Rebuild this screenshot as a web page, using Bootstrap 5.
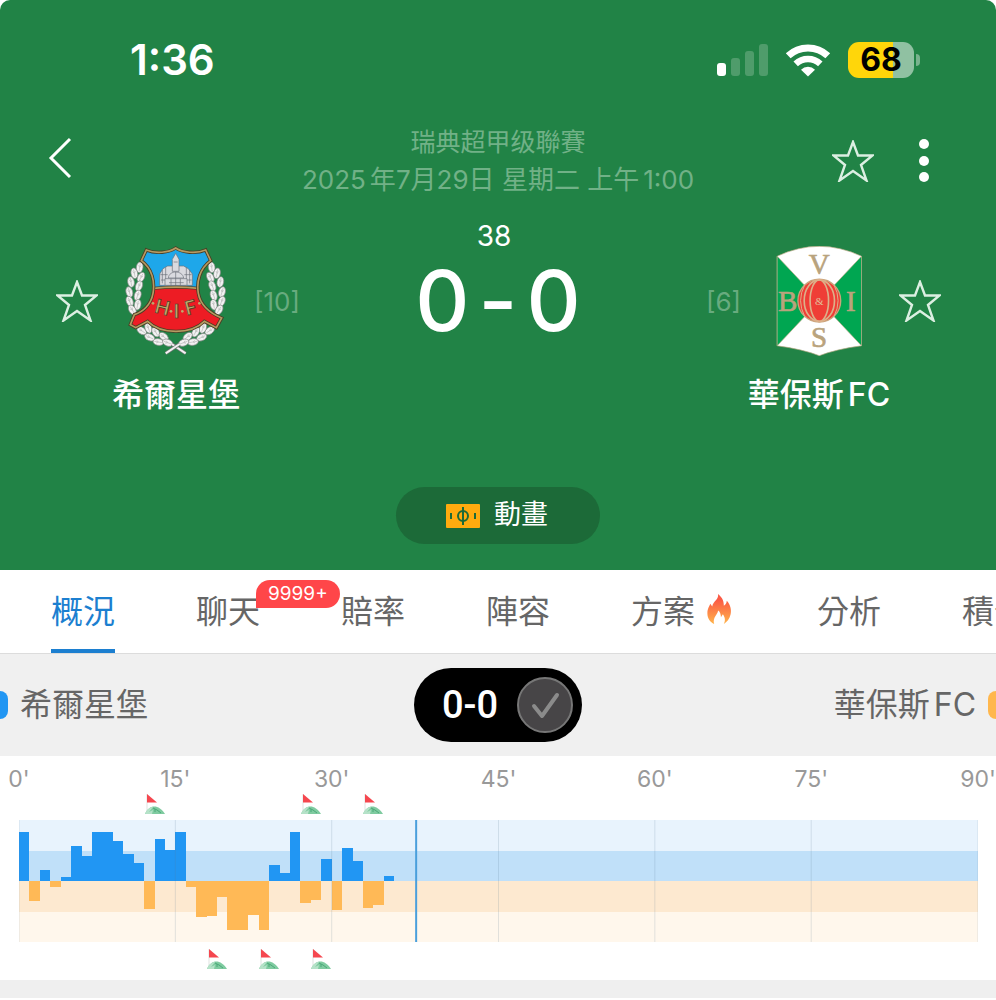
<!DOCTYPE html>
<html lang="zh-Hant">
<head>
<meta charset="utf-8">
<meta name="viewport" content="width=device-width, initial-scale=1">
<title>希爾星堡 0-0 華保斯FC</title>
<link rel="stylesheet" href="https://cdn.jsdelivr.net/npm/bootstrap@5.3.0/dist/css/bootstrap.min.css">
<style>
  body { font-family: Inter, "Noto Sans CJK TC", sans-serif; background: #fff; overflow-x: hidden; }
  button { font-family: inherit; }
  svg { display: block; flex: none; }

  .match-head { background: #218346; border-radius: 10px 10px 0 0; padding: 36px 0 26px; }
  .status-bar { height: 48px; padding: 0 76px 0 130px; }
  .clock { font-size: 42px; line-height: 48px; font-weight: 600; }
  .battery { width: 66px; height: 36px; border-radius: 11px; font-size: 32px; line-height: 36px; font-weight: 700; color: #000;
    background: linear-gradient(90deg, #ffd60a 68%, #90c1a2 68%); }
  .battery-cap { width: 4px; height: 12px; border-radius: 0 6px 6px 0; background: #79b38e; margin-left: 2px; }

  .top-nav { margin-top: 40px; padding: 0 48px; }
  .side { flex: 1 1 0; }
  .icon-btn { background: none; border: 0; padding: 0; color: #fff; }
  .more-btn { padding: 0 18px 0 44px; }
  .league { font-size: 25px; line-height: 37px; color: #71b187; }
  .kickoff { font-size: 26px; line-height: 37px; color: #71b187; white-space: nowrap; }

  .team { margin-top: 48px; }
  .team-home { padding-left: 56px; }
  .team-away { padding-right: 55px; }
  .crest-line { height: 110px; }
  .team-body { width: 144px; margin: 0 6px; }
  .team-away .team-body { margin-right: 8px; }
  .team-name { font-size: 32px; line-height: 40px; margin-top: 19px; font-weight: 500; white-space: nowrap; }
  .rank { font-size: 26px; color: #68ab7f; }
  .minute { font-size: 28px; line-height: 36px; margin-top: 20px; }
  .score { font-weight: 500; font-size: 84px; line-height: 94px; gap: 9px; }
  .anim-btn { margin-top: 72px; height: 57px; padding: 0 52px 0 50px; border: 0; border-radius: 29px; background: #1c6a38; color: #fff; font-size: 27px; gap: 14px; }

  .tab-strip { gap: 81px; padding-left: 51px; border-bottom: 1px solid #dcdcdc; overflow: hidden; }
  .tab-link { font-size: 32px; line-height: 84px; height: 83px; color: #666; text-decoration: none; white-space: nowrap; flex: none; }
  .tab-link.active { color: #1c7fd0; box-shadow: inset 0 -4px #1c7fd0; }
  .flame { margin: 24px 4px 0 11px; }
  .chat-count { position: absolute; left: 60px; top: 10px; height: 28px; padding: 0 12px; border-radius: 14px 14px 14px 0; background: #ff4649; color: #fff; font-size: 19px; line-height: 28px; }

  .team-band { background: #f0f0f0; height: 102px; font-size: 32px; color: #666; }
  .swatch { width: 8px; height: 28px; }
  .swatch-home { background: #2196f3; border-radius: 0 8px 8px 0; margin-right: 12px; }
  .swatch-away { background: #ffb74d; border-radius: 8px 0 0 8px; margin-left: 12px; }
  .score-pill { width: 168px; height: 74px; border: 0; border-radius: 37px; background: #000; color: #fff; padding: 0 9px 0 28px; font-family: Roboto, sans-serif; font-weight: 500; font-size: 38px; }

  .momentum { padding: 8px 18px 11px 19px; }
  .minutes { display: grid; grid-template-columns: repeat(92, minmax(0, 1fr)); grid-auto-columns: 0; }
  .minutes > * { grid-row: 1; width: 0; display: flex; justify-content: center; white-space: nowrap; }
  .axis { height: 30px; line-height: 30px; font-size: 23px; color: #999; }
  .events { height: 20px; }
  .plot { width: 100%; height: 122px; margin: 6px 0 7px; }
  .divider { height: 18px; background: #efefef; margin-bottom: 2px; }
</style>
</head>
<body>

<svg width="0" height="0" class="position-absolute" aria-hidden="true">
  <defs>
    <symbol id="star" viewBox="0 0 42 42"><path d="M21 2 26 15.500H40.500L29 25 34.500 40.500 21 31 7.500 40.500 13 25 1.500 15.500H16Z" fill="none" stroke="#dcefe2" stroke-width="2.400"/></symbol>
    <symbol id="corner" viewBox="0 0 20 20">
      <path d="M2 0v18" stroke="#dfe3e0" stroke-width="1"/>
      <path d="M2 0 12 8.500H2Z" fill="#f5474f"/>
      <path d="M0 20C4 10 14 10 20 20Z" fill="#7fcba0"/>
      <path d="M0 20C2 15 5 13 8 13L4 18 8 16 7 20Z" fill="#b5e2c8"/>
      <path d="M8 14 12 16 16 19M10 15v3" stroke="#4ba878" fill="none"/>
    </symbol>
    <g id="leaf">
      <ellipse rx="10" ry="16" fill="#f2f2f2" stroke="#888" stroke-width="2"/>
      <path d="M0-12V12M-4-6 0 0 4-6" stroke="#bbb" stroke-width="2" fill="none"/>
    </g>
    <g id="branch">
      <use href="#leaf" transform="translate(302 112) rotate(8)"/>
      <use href="#leaf" transform="translate(286 130) rotate(-12)"/>
      <use href="#leaf" transform="translate(306 142) rotate(28)"/>
      <use href="#leaf" transform="translate(276 156) rotate(-10)"/>
      <use href="#leaf" transform="translate(300 168) rotate(22)"/>
      <use href="#leaf" transform="translate(271 186) rotate(-16)"/>
      <use href="#leaf" transform="translate(296 196) rotate(18)"/>
      <use href="#leaf" transform="translate(272 214) rotate(-22)"/>
      <use href="#leaf" transform="translate(296 224) rotate(10)"/>
      <use href="#leaf" transform="translate(280 240) rotate(-32)"/>
      <use href="#leaf" transform="translate(308 302) rotate(-55)"/>
      <use href="#leaf" transform="translate(328 294) rotate(-20)"/>
      <use href="#leaf" transform="translate(332 322) rotate(-65)"/>
      <use href="#leaf" transform="translate(350 306) rotate(-30)"/>
      <use href="#leaf" transform="translate(358 336) rotate(-80)"/>
      <use href="#leaf" transform="translate(374 320) rotate(-50)"/>
      <use href="#leaf" transform="translate(386 338) rotate(-70)"/>
      <path d="M398 342 440 370" stroke="#777" stroke-width="10"/>
      <path d="M398 342 440 370" stroke="#f2f2f2" stroke-width="6"/>
    </g>
    <path id="shield" d="M410 54C390 68 350 72 322 60L307 92C340 116 348 155 342 190C336 224 312 246 286 254L274 284 290 293 326 274C350 298 380 304 411 304 442 304 472 298 496 274L532 293 548 264C510 248 484 224 478 190 472 155 482 116 515 92L500 60C472 72 430 68 410 54Z"/>
  </defs>
</svg>

<header class="match-head text-white">
  <div class="status-bar d-flex align-items-center">
    <span class="clock me-auto">1:36</span>
    <svg width="52" height="34" viewBox="0 0 52 34" role="img" aria-label="訊號">
      <rect x="1" y="20" width="9" height="13" rx="3" fill="#fff"/>
      <g fill="#4f9c6b"><rect x="15" y="15" width="9" height="18" rx="3"/><rect x="29" y="8" width="9" height="25" rx="3"/><rect x="43" y="1" width="9" height="32" rx="3"/></g>
    </svg>
    <svg class="mx-3" width="48" height="34" viewBox="0 0 48 34" role="img" aria-label="Wi-Fi">
      <path d="M4.200 12.800A29 29 0 0 1 43.800 12.800" fill="none" stroke="#fff" stroke-width="7"/>
      <path d="M11.700 20.800A18 18 0 0 1 36.300 20.800" fill="none" stroke="#fff" stroke-width="6.500"/>
      <path d="M24 33.500 17 26.700A10 10 0 0 1 31 26.700Z" fill="#fff"/>
    </svg>
    <span class="battery text-center">68</span><span class="battery-cap"></span>
  </div>

  <div class="top-nav d-flex align-items-center">
    <div class="side">
      <button class="icon-btn" type="button" aria-label="返回">
        <svg width="24" height="42" viewBox="0 0 24 42"><path d="M22 2 3 21 22 40" fill="none" stroke="#fff" stroke-width="3"/></svg>
      </button>
    </div>
    <div class="text-center">
      <div class="league">瑞典超甲级聯賽</div>
      <div class="kickoff">2025<span class="ms-1">年</span>7月29日 星期二 上午<span class="ms-1">1:00</span></div>
    </div>
    <div class="side d-flex justify-content-end align-items-center">
      <button class="icon-btn" type="button" aria-label="收藏比賽"><svg width="42" height="42"><use href="#star"/></svg></button>
      <button class="icon-btn more-btn" type="button" aria-label="更多">
        <svg width="12" height="44" viewBox="0 0 12 44"><g fill="#fff"><circle cx="6" cy="5" r="5"/><circle cx="6" cy="22" r="5"/><circle cx="6" cy="38" r="5"/></g></svg>
      </button>
    </div>
  </div>

  <div class="row g-0">
    <div class="col-4 team team-home d-flex">
      <div class="crest-line d-flex align-items-center"><button class="icon-btn" type="button" aria-label="收藏希爾星堡"><svg width="42" height="42"><use href="#star"/></svg></button></div>
      <div class="team-body">
        <div class="crest-line d-flex justify-content-center">
          <svg width="102" height="110" viewBox="258 48 306 330" role="img" aria-label="希爾星堡隊徽">
            <use href="#branch"/>
            <use href="#branch" transform="translate(820) scale(-1 1)"/>
            <use href="#shield" fill="#ed1c24"/>
            <path d="M410 54C390 68 350 72 322 60L307 92C340 116 346 140 345 174Q411 168 476 174C472 155 482 116 515 92L500 60C472 72 430 68 410 54Z" fill="#1ea7ea"/>
            <g fill="#d9dadf" stroke="#6b7079" stroke-width="2">
              <path d="M362 166V132L372 116 386 108H434L448 116 460 132V166Z"/>
              <path d="M400 124V88L410 70 420 88V124Z"/>
              <path d="M388 144C390 120 430 120 434 144Z"/>
              <path d="M378 166V146H444V166Z"/>
              <path d="M364 134H386M436 134H458M366 150H378M444 150H458M390 158H434M396 146V166M410 126V166M424 146V166M404 96H416M370 120V160M452 120V160M380 112V146M442 112V146"/>
            </g>
            <path d="M344 175Q411 168 478 175" fill="none" stroke="#4b3c24" stroke-width="9"/>
            <path d="M344 175Q411 168 478 175" fill="none" stroke="#b59b62" stroke-width="5"/>
            <use href="#shield" fill="none" stroke="#4b3c24" stroke-width="10"/>
            <use href="#shield" fill="none" stroke="#b59b62" stroke-width="5"/>
            <g font-family="Inter, sans-serif" font-weight="600" font-size="58" fill="#c0a86c" stroke="#4b3c24" stroke-width="2" text-anchor="middle">
              <text transform="translate(365 252) rotate(14)">H</text><text x="412" y="264">I</text><text transform="translate(460 252) rotate(-14)">F</text>
            </g>
            <g fill="#c0a86c"><circle cx="342" cy="220" r="4"/><circle cx="396" cy="244" r="4"/><circle cx="430" cy="244" r="4"/><circle cx="481" cy="220" r="4"/></g>
          </svg>
        </div>
        <div class="team-name text-center">希爾星堡</div>
      </div>
      <div class="crest-line rank d-flex align-items-center">[10]</div>
    </div>

    <div class="col-4 d-flex flex-column align-items-center">
      <div class="minute pe-2">38</div>
      <div class="score d-flex justify-content-center"><span>0</span><span>-</span><span>0</span></div>
    </div>

    <div class="col-4 team team-away d-flex justify-content-end">
      <div class="crest-line rank d-flex align-items-center">[6]</div>
      <div class="team-body">
        <div class="crest-line d-flex justify-content-center">
          <svg width="88" height="110" viewBox="255 43 264 334" role="img" aria-label="華保斯FC隊徽">
            <path d="M260 74Q388 14 516 74V346Q440 356 388 376 336 356 260 346Z" fill="#fff" stroke="#b9a983" stroke-width="2"/>
            <path d="M260 74 388 210 260 346ZM516 74 388 210 516 346Z" fill="#00a651" stroke="#b9a983" stroke-width="2"/>
            <circle cx="388" cy="209" r="65" fill="#ef3e36" stroke="#c9a57c" stroke-width="4"/>
            <g fill="none" stroke="#dcb089" stroke-width="5"><ellipse cx="388" cy="209" rx="46" ry="63"/><ellipse cx="388" cy="209" rx="28" ry="63"/></g>
            <g fill="none" stroke="#dcb089" stroke-width="3"><path d="M344 160Q318 209 344 258M432 160Q458 209 432 258"/></g>
            <circle cx="388" cy="209" r="17" fill="#ef3e36"/>
            <g font-family="'Liberation Serif', serif" fill="#b9a37d" stroke="#b9a37d" stroke-width="2" text-anchor="middle">
              <text x="388" y="128" font-size="88">V</text><text x="292" y="239" font-size="88">B</text><text x="484" y="239" font-size="88">I</text><text x="387" y="350" font-size="88">S</text>
              <text x="388" y="221" font-size="34" fill="#e3bd98" stroke="none">&amp;</text>
            </g>
          </svg>
        </div>
        <div class="team-name text-center">華保斯<span class="ms-1">FC</span></div>
      </div>
      <div class="crest-line d-flex align-items-center"><button class="icon-btn" type="button" aria-label="收藏華保斯FC"><svg width="42" height="42"><use href="#star"/></svg></button></div>
    </div>
  </div>

  <button class="anim-btn d-flex align-items-center mx-auto" type="button">
    <svg width="34" height="24" viewBox="0 0 34 24"><rect width="34" height="24" rx="1" fill="#ffab0f"/><g fill="none" stroke="#1c6a38" stroke-width="2"><circle cx="17" cy="12" r="5"/><path d="M17 3V21M5 9v6M29 9v6"/></g></svg>
    <span>動畫</span>
  </button>
</header>

<nav class="tab-strip d-flex">
  <a class="tab-link active" href="#overview" aria-current="page">概況</a>
  <a class="tab-link position-relative" href="#chat">聊天<span class="chat-count">9999+</span></a>
  <a class="tab-link" href="#odds">賠率</a>
  <a class="tab-link" href="#lineup">陣容</a>
  <a class="tab-link d-flex" href="#tips">方案
    <svg class="flame" width="26" height="31" viewBox="0 0 26 32"><defs><linearGradient id="fire" x2="0" y2="1"><stop offset=".2" stop-color="#fb5b45"/><stop offset="1" stop-color="#ffb44a"/></linearGradient></defs><path d="M12 0C17 4 18 8 18 12 20 11 21 9 21 7 25 11 26 17 25 21 24 26 21 29 18 31 20 27 19 24 17 21L15 24C15 21 14 18 12 17 12 21 6 24 8 31 4 29 1 25 1 20 1 15 3 13 4 10L6 13C7 7 13 6 12 0Z" fill="url(#fire)"/></svg></a>
  <a class="tab-link" href="#analysis">分析</a>
  <a class="tab-link" href="#standings">積分</a>
</nav>

<section class="team-band d-flex align-items-center" id="overview">
  <div class="side d-flex align-items-center"><span class="swatch swatch-home"></span>希爾星堡</div>
  <button class="score-pill d-flex align-items-center justify-content-between" type="button" aria-pressed="false">
    0-0
    <svg width="56" height="56" viewBox="0 0 56 56"><circle cx="28" cy="28" r="27" fill="#474547" stroke="#777" stroke-width="2"/><path d="M17 29 25 39 40 18" fill="none" stroke="#8b8b8b" stroke-width="4" stroke-linecap="round" stroke-linejoin="round"/></svg>
  </button>
  <div class="side d-flex align-items-center justify-content-end">華保斯<span class="ms-1">FC</span><span class="swatch swatch-away"></span></div>
</section>

<main class="momentum">
  <div class="minutes axis">
    <span style="grid-column:1">0'</span><span style="grid-column:16">15'</span><span style="grid-column:31">30'</span><span style="grid-column:47">45'</span><span style="grid-column:62">60'</span><span style="grid-column:77">75'</span><span style="grid-column:93">90'</span>
  </div>
  <div class="minutes events">
    <span style="grid-column:14"><svg width="20" height="20"><use href="#corner"/></svg></span>
    <span style="grid-column:29"><svg width="20" height="20"><use href="#corner"/></svg></span>
    <span style="grid-column:35"><svg width="20" height="20"><use href="#corner"/></svg></span>
  </div>
  <svg class="plot" viewBox="0 0 92 122" preserveAspectRatio="none" role="img" aria-label="比賽走勢">
    <rect width="92" height="31" fill="#e8f3fd"/><rect y="31" width="92" height="30" fill="#c0e0f9"/>
    <rect y="61" width="92" height="31" fill="#fde9d0"/><rect y="92" width="92" height="30" fill="#fff7ec"/>
    <path fill="#2196f3" shape-rendering="crispEdges" d="M0 61V12h1V61ZM2 61V50h1V61ZM4 61V57h1V26h1V36h1V12h2V21h1V34h1V43h1V61ZM13 61V19h1V30h1V12h1V61ZM24 61V45h1V53h1V12h1V61ZM29 61V39h1V61ZM31 61V28h1V41h1V61ZM35 61V56h1V61Z"/>
    <path fill="#ffb956" shape-rendering="crispEdges" d="M1 61V81h1V61ZM3 61V67h1V61ZM12 61V89h1V61ZM16 61V67h1V97h1V96h1V77h1V110h2V95h1V110h1V61ZM27 61V83h1V80h1V61ZM30 61V90h1V61ZM33 61V88h1V85h1V61Z"/>
    <path d="M0 0V122M15 0V122M30 0V122M46 0V122M61 0V122M76 0V122M92 0V122" stroke="#5b7890" stroke-opacity=".18" stroke-width="1" vector-effect="non-scaling-stroke"/>
    <path d="M38.100 0V122" stroke="#4a9fdc" stroke-width="2" vector-effect="non-scaling-stroke"/>
  </svg>
  <div class="minutes events">
    <span style="grid-column:20"><svg width="20" height="20"><use href="#corner"/></svg></span>
    <span style="grid-column:25"><svg width="20" height="20"><use href="#corner"/></svg></span>
    <span style="grid-column:30"><svg width="20" height="20"><use href="#corner"/></svg></span>
  </div>
</main>
<div class="divider"></div>

<script src="https://cdn.jsdelivr.net/npm/bootstrap@5.3.0/dist/js/bootstrap.bundle.min.js"></script>
</body>
</html>
